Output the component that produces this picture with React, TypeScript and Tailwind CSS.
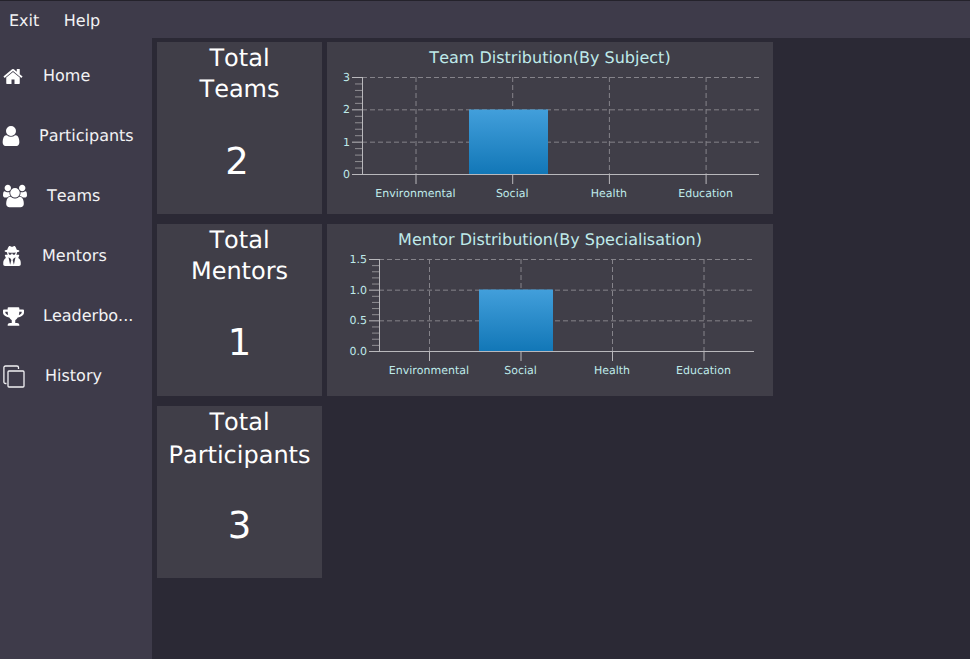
import React from 'react';
import { FaUserSecret, FaTrophy } from 'react-icons/fa';

const font = "font-['DejaVu_Sans',sans-serif]";

const HomeIcon = () => (
  <svg width="22" height="21" viewBox="0 0 1792 1792" fill="#fff" className="block -ml-[1px]">
    <path d="M1472 992v480q0 26-19 45t-45 19h-384v-384h-256v384h-384q-26 0-45-19t-19-45v-480q0-1 .5-3t.5-3l575-474 575 474q1 2 1 6zm223-69l-62 74q-8 9-21 11h-3q-13 0-21-7l-692-577-692 577q-12 8-24 7-13-2-21-11l-62-74q-8-10-7-23.5t11-21.5l719-599q32-26 76-26t76 26l244 204v-195q0-14 9-23t23-9h192q14 0 23 9t9 23v408l219 182q10 8 11 21.5t-7 23.5z" />
  </svg>
);

const UserIcon = () => (
  <svg width="20" height="22" viewBox="128 128 1536 1536" fill="#fff" className="block -ml-[2px] -mt-[1px]">
    <path d="M1536 1399q0 109-62.5 187t-150.5 78h-854q-88 0-150.5-78t-62.5-187q0-85 8.5-160.5t31.5-152 58.5-131 94-89 134.5-34.5q131 128 313 128t313-128q76 0 134.5 34.5t94 89 58.5 131 31.5 152 8.5 160.5zm-256-887q0 159-112.5 271.5t-271.5 112.5-271.5-112.5-112.5-271.5 112.5-271.5 271.5-112.5 271.5 112.5 112.5 271.5z" />
  </svg>
);

const UsersIcon = () => (
  <svg width="24" height="24" viewBox="0 0 1920 1792" fill="#fff" className="block">
    <path d="M593 896q-162 5-265 128h-134q-82 0-138-40.5t-56-118.5q0-353 124-353 6 0 43.5 21t97.5 42.5 119 21.5q67 0 133-23-5 37-5 66 0 139 81 256zm1071 637q0 120-73 189.5t-194 69.5h-874q-121 0-194-69.5t-73-189.5q0-53 3.5-103.5t14-109 26.5-108.5 43-97.5 62-81 85.5-53.5 111.5-20q10 0 43 21.5t73 48 107 48 135 21.5 135-21.5 107-48 73-48 43-21.5q61 0 111.5 20t85.5 53.5 62 81 43 97.5 26.5 108.5 14 109 3.5 103.5zm-1024-1277q0 106-75 181t-181 75-181-75-75-181 75-181 181-75 181 75 75 181zm704 384q0 159-112.5 271.5t-271.5 112.5-271.5-112.5-112.5-271.5 112.5-271.5 271.5-112.5 271.5 112.5 112.5 271.5zm576 225q0 78-56 118.5t-138 40.5h-134q-103-123-265-128 81-117 81-256 0-29-5-66 66 23 133 23 59 0 119-21.5t97.5-42.5 43.5-21q124 0 124 353zm-128-609q0 106-75 181t-181 75-181-75-75-181 75-181 181-75 181 75 75 181z" />
  </svg>
);

const MentorIcon = () => <FaUserSecret size={20} color="#fff" className="block -ml-[1px]" />;
const TrophyIcon = () => <FaTrophy size={21} color="#fff" className="block" />;

const HistoryIcon = () => (
  <svg width="22" height="23" viewBox="0 0 22 23" fill="none" stroke="#f2f2f4" strokeWidth="1.3" className="block">
    <path d="M3.5 18.5h-1a1.6 1.6 0 0 1-1.6-1.6V2.6A1.6 1.6 0 0 1 2.5 1h11.4a1.6 1.6 0 0 1 1.6 1.6v1.4" />
    <rect x="5" y="6" width="16" height="16" rx="1" />
  </svg>
);

const navItems = [
  { label: 'Home', icon: <HomeIcon />, gap: 'w-[43px]' },
  { label: 'Participants', icon: <UserIcon />, gap: 'w-[39px]' },
  { label: 'Teams', icon: <UsersIcon />, gap: 'w-[47px]' },
  { label: 'Mentors', icon: <MentorIcon />, gap: 'w-[42px]' },
  { label: 'Leaderbo...', icon: <TrophyIcon />, gap: 'w-[43px]' },
  { label: 'History', icon: <HistoryIcon />, gap: 'w-[45px]' },
];

type ChartProps = {
  title: string;
  ticks: string[];
  plotX: number;
  plotW: number;
  plotH: number;
  catWidth: number;
  catStart: number;
  barX: number;
  barW: number;
  barTop: number;
};

const cats = ['Environmental', 'Social', 'Health', 'Education'];

function Chart({ title, ticks, plotX, plotW, plotH, catWidth, catStart, barX, barW, barTop }: ChartProps) {
  const plotY = 35;
  const bottom = plotY + plotH;
  const steps = ticks.length - 1;
  const minor: number[] = [];
  for (let i = 0; i < steps * 5; i++) {
    if (i % 5 !== 0) minor.push(plotY + (plotH * i) / (steps * 5));
  }
  return (
    <svg width="446" height="172" className="block">
      <text x="223" y="21" textAnchor="middle" fontSize="16" fill="#bfeaea" fontFamily="DejaVu Sans">
        {title}
      </text>
      {ticks.map((t, i) => {
        const y = plotY + (plotH * i) / steps;
        return (
          <g key={t}>
            {i < steps && (
              <line x1={plotX} x2={plotX + plotW} y1={y + 0.5} y2={y + 0.5} stroke="#85838a" strokeDasharray="5 3" />
            )}
            <line x1={plotX - 10} x2={plotX} y1={y + 0.5} y2={y + 0.5} stroke="#b9b8bc" />
            <text x={plotX - 12} y={y + 4} textAnchor="end" fontSize="11" fill="#bfeaea" fontFamily="DejaVu Sans">
              {t}
            </text>
          </g>
        );
      })}
      {minor.map((y) => (
        <line key={y} x1={plotX - 7} x2={plotX} y1={y + 0.5} y2={y + 0.5} stroke="#8f8e93" />
      ))}
      {cats.map((c, i) => {
        const x = catStart + catWidth * i;
        return (
          <g key={c}>
            <line x1={x + 0.5} x2={x + 0.5} y1={plotY} y2={bottom} stroke="#85838a" strokeDasharray="5 3" />
            <line x1={x + 0.5} x2={x + 0.5} y1={bottom} y2={bottom + 10} stroke="#b9b8bc" />
            <text x={x} y={bottom + 23} textAnchor="middle" fontSize="11" fill="#bfeaea" fontFamily="DejaVu Sans">
              {c}
            </text>
          </g>
        );
      })}
      <defs>
        <linearGradient id={`bar-${plotX}`} x1="0" y1="0" x2="0" y2="1">
          <stop offset="0" stopColor="#429fdb" />
          <stop offset="1" stopColor="#1277b7" />
        </linearGradient>
      </defs>
      <rect x={barX} y={barTop} width={barW} height={bottom - barTop} fill={`url(#bar-${plotX})`} />
      <line x1={plotX + 0.5} x2={plotX + 0.5} y1={plotY} y2={bottom} stroke="#b9b8bc" />
      <line x1={plotX} x2={plotX + plotW} y1={bottom + 0.5} y2={bottom + 0.5} stroke="#b9b8bc" />
    </svg>
  );
}

function StatCard({ line1, line2, value, line2Class, valueClass }: { line1: string; line2: string; value: string; line2Class?: string; valueClass?: string }) {
  return (
    <div className="w-[165px] h-[171.7px] bg-[#403e48] text-white text-center flex flex-col items-center shrink-0">
      <div className="text-[24px] leading-[30px] mt-[1px]">
        <div>{line1}</div>
        <div className={line2Class}>{line2}</div>
      </div>
      <div className={`text-[37px] leading-[44px] ${valueClass ?? ''}`}>{value}</div>
    </div>
  );
}

export default function App() {
  return (
    <div className={`w-[970px] h-[659px] overflow-hidden flex flex-col bg-[#2b2935] [text-rendering:geometricPrecision] [font-kerning:none] ${font}`}>
      {/* top menu */}
      <div className="h-[38px] shrink-0 bg-[#3e3b4a] border-t border-[#24222b] flex items-center text-[#f2f2f4] text-[16px] pl-[9px] gap-[24.5px] pt-[3px]">
        <span>Exit</span>
        <span>Help</span>
      </div>
      <div className="flex flex-1 min-h-0">
        {/* side nav */}
        <div className="w-[152px] shrink-0 bg-[#3e3b4a] pt-[8px]">
          {navItems.map(({ label, icon, gap }) => (
            <div key={label} className="h-[60px] flex items-center text-[16px] text-[#f2f2f4] pl-[3px]">
              <span className={`${gap} shrink-0`}>{icon}</span>
              <span className="-ml-[3px]">{label}</span>
            </div>
          ))}
        </div>
        {/* dashboard */}
        <div className="flex-1 pl-[5px] pt-[4px] flex flex-col gap-[10.3px]">
          <div className="flex gap-[5px]">
            <StatCard line1="Total" line2="Teams" line2Class="mt-[1px]" value="2" valueClass="-ml-[5px] mt-[36px]" />
            <div className="w-[446px] h-[171.7px] bg-[#403e48] overflow-hidden">
              <Chart
                title="Team Distribution(By Subject)"
                ticks={['3', '2', '1', '0']}
                plotX={35}
                plotW={397}
                plotH={97}
                catWidth={96.7}
                catStart={88.5}
                barX={142}
                barW={79}
                barTop={67.5}
              />
            </div>
          </div>
          <div className="flex gap-[5px]">
            <StatCard line1="Total" line2="Mentors" line2Class="mt-[1px]" value="1" valueClass="mt-[35px]" />
            <div className="w-[446px] h-[171.7px] bg-[#403e48] overflow-hidden">
              <Chart
                title="Mentor Distribution(By Specialisation)"
                ticks={['1.5', '1.0', '0.5', '0.0']}
                plotX={52}
                plotW={375}
                plotH={92}
                catWidth={91.5}
                catStart={102}
                barX={152}
                barW={74}
                barTop={65.5}
              />
            </div>
          </div>
          <StatCard line1="Total" line2="Participants" value="3" line2Class="mt-[3px]" valueClass="mt-[34px]" />
        </div>
      </div>
    </div>
  );
}
